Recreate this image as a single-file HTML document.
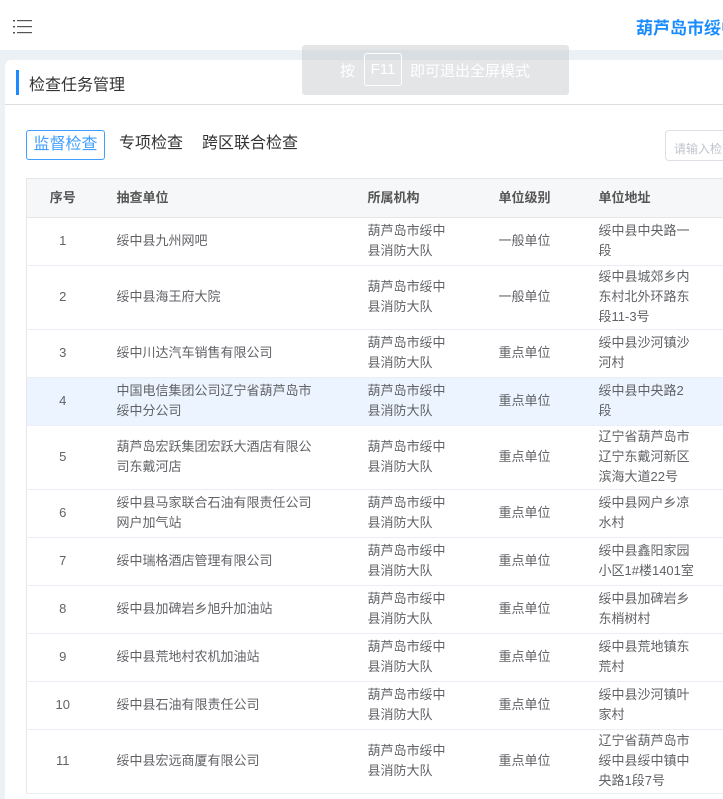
<!DOCTYPE html>
<html><head><meta charset="utf-8"><style>
*{margin:0;padding:0;box-sizing:border-box}
html,body{width:723px;height:799px;overflow:hidden}
body{background:#ebf1f5;font-family:"Liberation Sans","Noto Sans CJK SC",sans-serif;position:relative}
.hdr{position:absolute;left:0;top:0;width:723px;height:50px;background:#fff}
.ttl{position:absolute;left:636px;top:14px;font-size:17px;font-weight:bold;color:#1a8cff;white-space:nowrap}
.card{position:absolute;left:5px;top:60px;width:718px;height:739px;background:#fff;border-radius:6px 0 0 0}
.bar{position:absolute;left:16px;top:70px;width:3px;height:25px;background:#1a8cff}
.h1{position:absolute;left:29px;top:71px;font-size:16px;color:#333}
.div{position:absolute;left:5px;top:104px;width:718px;height:1px;background:#ddd}
.tab{position:absolute;top:130px;height:30px;line-height:28px;font-size:16px;color:#333}
.tab.a{left:26px;width:79px;border:1px solid #409eff;border-radius:3px;color:#409eff;text-align:center}
.inp{position:absolute;left:665px;top:130px;width:58px;height:31px;border:1px solid #dcdfe6;border-right:none;border-radius:4px 0 0 4px;font-size:12px;color:#c0c4cc;padding:9px 0 0 8px;white-space:nowrap;overflow:hidden}
.tw{position:absolute;left:26px;top:178px;width:697px;height:621px;overflow:hidden}
table{border-collapse:collapse;table-layout:fixed;width:720px;font-size:13px;color:#606266;border-left:1px solid #e6e6e6;border-top:1px solid #e6e6e6}
th{height:39px;background:#f6f7f8;font-weight:bold;color:#555;text-align:left;border-bottom:1px solid #e6e6e6;line-height:20px}
tr.h{height:39px}
td{line-height:20px;padding:1px 0 2px;border-bottom:1px solid #ebeef5;vertical-align:middle}
tr{height:48px}
td:nth-child(1),th:nth-child(1){text-align:center}
.c2{padding-left:18px;padding-right:39px}
.c3{padding-left:12px;padding-right:29px}
.c4{padding-left:18px}
.c5{padding-left:12px;padding-right:52px}
tr.hl td{background:#ecf5ff}
.ov{position:absolute;left:302px;top:45px;width:267px;height:50px;background:rgba(200,204,208,.5);border-radius:3px;color:#fff;font-size:15px}
.ov span{position:absolute;top:15px}
.key{position:absolute;left:62px;top:8px;width:38px;height:33px;border:1px solid #fff;border-radius:3px;text-align:center;line-height:31px}
</style></head><body>
<div class="hdr">
<svg style="position:absolute;left:13px;top:19px" width="20" height="16"><g fill="#555"><rect x="0" y="1" width="2" height="1.5"/><rect x="4" y="1" width="15" height="1.2"/><rect x="0" y="7" width="2" height="1.5"/><rect x="4" y="7" width="15" height="1.2"/><rect x="0" y="13" width="2" height="1.5"/><rect x="4" y="13" width="15" height="1.2"/></g></svg>
<div class="ttl">葫芦岛市绥中</div>
</div>
<div class="card"></div>
<div class="bar"></div><div class="h1">检查任务管理</div>
<div class="div"></div>
<div class="tab a">监督检查</div>
<div class="tab" style="left:119px">专项检查</div>
<div class="tab" style="left:202px">跨区联合检查</div>
<div class="inp">请输入检查</div>
<div class="tw"><table>
<colgroup><col style="width:72px"><col style="width:257px"><col style="width:125px"><col style="width:106px"><col style="width:160px"></colgroup>
<tr class="h"><th>序号</th><th class="c2">抽查单位</th><th class="c3">所属机构</th><th class="c4">单位级别</th><th class="c5">单位地址</th></tr>
<tr><td>1</td><td class="c2">绥中县九州网吧</td><td class="c3">葫芦岛市绥中县消防大队</td><td class="c4">一般单位</td><td class="c5">绥中县中央路一段</td></tr>
<tr><td>2</td><td class="c2">绥中县海王府大院</td><td class="c3">葫芦岛市绥中县消防大队</td><td class="c4">一般单位</td><td class="c5">绥中县城郊乡内东村北外环路东段11-3号</td></tr>
<tr><td>3</td><td class="c2">绥中川达汽车销售有限公司</td><td class="c3">葫芦岛市绥中县消防大队</td><td class="c4">重点单位</td><td class="c5">绥中县沙河镇沙河村</td></tr>
<tr class="hl"><td>4</td><td class="c2">中国电信集团公司辽宁省葫芦岛市绥中分公司</td><td class="c3">葫芦岛市绥中县消防大队</td><td class="c4">重点单位</td><td class="c5">绥中县中央路2段</td></tr>
<tr><td>5</td><td class="c2">葫芦岛宏跃集团宏跃大酒店有限公司东戴河店</td><td class="c3">葫芦岛市绥中县消防大队</td><td class="c4">重点单位</td><td class="c5">辽宁省葫芦岛市辽宁东戴河新区滨海大道22号</td></tr>
<tr><td>6</td><td class="c2">绥中县马家联合石油有限责任公司网户加气站</td><td class="c3">葫芦岛市绥中县消防大队</td><td class="c4">重点单位</td><td class="c5">绥中县网户乡凉水村</td></tr>
<tr><td>7</td><td class="c2">绥中瑞格酒店管理有限公司</td><td class="c3">葫芦岛市绥中县消防大队</td><td class="c4">重点单位</td><td class="c5">绥中县鑫阳家园小区1#楼1401室</td></tr>
<tr><td>8</td><td class="c2">绥中县加碑岩乡旭升加油站</td><td class="c3">葫芦岛市绥中县消防大队</td><td class="c4">重点单位</td><td class="c5">绥中县加碑岩乡东梢树村</td></tr>
<tr><td>9</td><td class="c2">绥中县荒地村农机加油站</td><td class="c3">葫芦岛市绥中县消防大队</td><td class="c4">重点单位</td><td class="c5">绥中县荒地镇东荒村</td></tr>
<tr><td>10</td><td class="c2">绥中县石油有限责任公司</td><td class="c3">葫芦岛市绥中县消防大队</td><td class="c4">重点单位</td><td class="c5">绥中县沙河镇叶家村</td></tr>
<tr><td>11</td><td class="c2">绥中县宏远商厦有限公司</td><td class="c3">葫芦岛市绥中县消防大队</td><td class="c4">重点单位</td><td class="c5">辽宁省葫芦岛市绥中县绥中镇中央路1段7号</td></tr>
</table></div>
<div class="ov"><span style="left:38px">按</span><div class="key">F11</div><span style="left:108px">即可退出全屏模式</span></div>
</body></html>
